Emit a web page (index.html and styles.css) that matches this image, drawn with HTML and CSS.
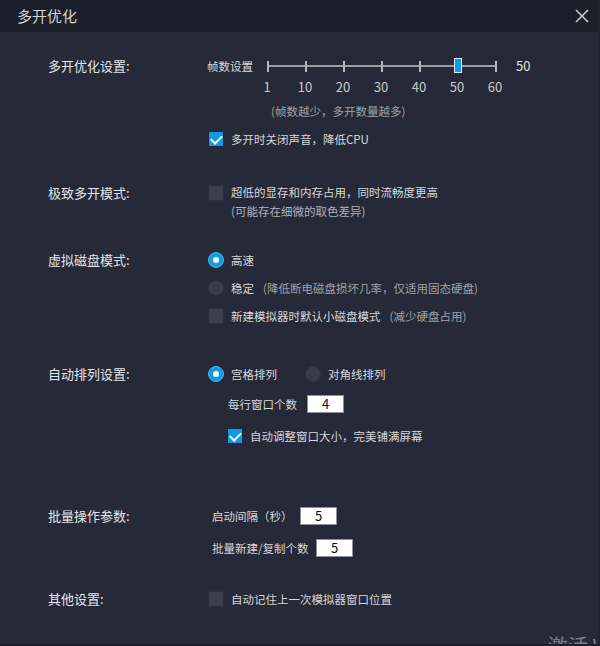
FILE: index.html
```html
<!DOCTYPE html>
<html lang="zh-CN">
<head>
<meta charset="utf-8">
<title>多开优化</title>
<link rel="stylesheet" href="styles.css">
</head>
<body>
<div class="window">
  <div class="titlebar">
    <span class="title">多开优化</span>
    <svg class="close" width="14" height="14" viewBox="0 0 14 14"><path d="M1 1 L13 13 M13 1 L1 13" stroke="#c9c9c9" stroke-width="1.6" fill="none"/></svg>
  </div>
  <div class="content">
    <section class="sec s1">
      <div class="label">多开优化设置:</div>
      <div class="items">
        <div class="slider-row">
          <span class="slider-name">帧数设置</span>
          <div class="track">
            <div class="line"></div>
            <i class="tick"></i><i class="tick"></i><i class="tick"></i><i class="tick"></i><i class="tick"></i><i class="tick"></i><i class="tick"></i>
            <span class="thumb"></span>
          </div>
          <span class="slider-val">50</span>
        </div>
        <div class="scale"><span>1</span><span>10</span><span>20</span><span>30</span><span>40</span><span>50</span><span>60</span></div>
        <div class="hint">(帧数越少，多开数量越多)</div>
        <div class="opt m-cb1"><span class="cb on"></span><span>多开时关闭声音，降低CPU</span></div>
      </div>
    </section>

    <section class="sec s2">
      <div class="label">极致多开模式:</div>
      <div class="items">
        <div class="opt multi"><span class="cb"></span><span class="lines"><span>超低的显存和内存占用，同时流畅度更高</span><span>(可能存在细微的取色差异)</span></span></div>
      </div>
    </section>

    <section class="sec s3">
      <div class="label">虚拟磁盘模式:</div>
      <div class="items gap8">
        <div class="opt"><span class="rd on"></span><span>高速</span></div>
        <div class="opt"><span class="rd"></span><span>稳定</span><span class="gray g1">(降低断电磁盘损坏几率，仅适用固态硬盘)</span></div>
        <div class="opt"><span class="cb"></span><span>新建模拟器时默认小磁盘模式</span><span class="gray g2">(减少硬盘占用)</span></div>
      </div>
    </section>

    <section class="sec s4">
      <div class="label">自动排列设置:</div>
      <div class="items">
        <div class="radios">
          <div class="opt"><span class="rd on"></span><span>宫格排列</span></div>
          <div class="opt r2"><span class="rd"></span><span>对角线排列</span></div>
        </div>
        <div class="field f-cols"><span class="fl">每行窗口个数</span><span class="input">4</span></div>
        <div class="opt indent m-cb2"><span class="cb on"></span><span>自动调整窗口大小，完美铺满屏幕</span></div>
      </div>
    </section>

    <section class="sec s5">
      <div class="label">批量操作参数:</div>
      <div class="items">
        <div class="field f-int"><span class="fl">启动间隔（秒）</span><span class="input">5</span></div>
        <div class="field f-cnt"><span class="fl">批量新建/复制个数</span><span class="input">5</span></div>
      </div>
    </section>

    <section class="sec s6">
      <div class="label">其他设置:</div>
      <div class="items">
        <div class="opt"><span class="cb"></span><span>自动记住上一次模拟器窗口位置</span></div>
      </div>
    </section>
  </div>
  <div class="watermark">激活 Windows</div>
</div>
</body>
</html>
```

FILE: styles.css
```css
* { box-sizing: border-box; }
html, body { margin: 0; padding: 0; }
body {
  width: 600px;
  height: 646px;
  overflow: hidden;
  background: #262a38;
  font-family: "Noto Sans CJK SC", "Microsoft YaHei", sans-serif;
  color: #d6d7db;
  font-size: 12px;
}
.window {
  position: relative;
  width: 600px;
  height: 646px;
  background: #262a38;
  border-right: 2px solid #1f2230;
  border-bottom: 2px solid #1c1f2a;
  overflow: hidden;
}
.titlebar {
  height: 32px;
  background: #1c1f29;
  display: flex;
  align-items: center;
  justify-content: space-between;
  padding: 0 9px 0 17px;
}
.title { font-size: 15px; color: #d2d3d6; line-height: 20px; }
.close { display: block; }

.content { padding-left: 48px; }
.sec { display: flex; align-items: flex-start; }
.label {
  width: 160px;
  flex: none;
  font-size: 13px;
  line-height: 20px;
  color: #e4e5e8;
}
.items { display: flex; flex-direction: column; font-size: 11.5px; }
.items.gap8 { gap: 8px; }

.s1 { padding-top: 24px; }
.s2 { margin-top: 34px; }
.s3 { margin-top: 29px; }
.s4 { margin-top: 38px; }
.s5 { margin-top: 60px; }
.s6 { margin-top: 31px; }

/* slider */
.slider-row { display: flex; align-items: center; height: 20px; margin-left: -1px; }
.slider-name { width: 60px; font-size: 11.5px; color: #d9dadd; line-height: 20px; }
.track {
  position: relative;
  width: 230px;
  height: 20px;
  display: flex;
  justify-content: space-between;
  align-items: center;
}
.track .line {
  position: absolute;
  left: 0; right: 0; top: 9px;
  height: 2px;
  background: #9c9ea4;
}
.tick {
  display: block;
  width: 2px;
  height: 11px;
  background: #b4b6bb;
  position: relative;
}
.thumb {
  position: absolute;
  left: 187px;
  top: 2px;
  width: 8px;
  height: 15px;
  background: #0f9ae3;
  border: 1px solid #e8f4fb;
}
.slider-val { margin-left: 19px; font-size: 13px; color: #e0e1e4; line-height: 20px; }

.scale {
  display: flex;
  justify-content: space-between;
  width: 258px;
  margin-left: 44px;
  margin-top: 1px;
  height: 20px;
  line-height: 20px;
  font-size: 13px;
  color: #c9cace;
}
.scale span { width: 30px; text-align: center; }

.hint {
  margin-left: 63px;
  margin-top: 4px;
  line-height: 20px;
  color: #9ea0a7;
}
.m-cb1 { margin-top: 8px; }

/* options */
.opt { display: flex; align-items: center; height: 20px; line-height: 20px; white-space: nowrap; }
.opt > .cb, .opt > .rd { margin-right: 7px; }
.cb {
  width: 16px; height: 16px; flex: none;
  background: #3c3f4c;
  border: 1px solid #2b2e3a;
  border-radius: 1px;
  position: relative;
}
.cb.on { background: #119be5; border-color: #1f2433; }
.cb.on::after {
  content: "";
  position: absolute;
  left: 4px; top: 1px;
  width: 5px; height: 9px;
  border: solid #ffffff;
  border-width: 0 2px 2px 0;
  transform: rotate(45deg);
}
.rd {
  width: 16px; height: 16px; flex: none;
  border-radius: 50%;
  background: #393c48;
  border: 1px solid #30333f;
  position: relative;
}
.rd.on { background: #119be5; border-color: #4bb6ee; }
.rd.on::after {
  content: "";
  position: absolute;
  left: 4px; top: 4px;
  width: 6px; height: 6px;
  border-radius: 50%;
  background: #ffffff;
}
.opt.multi { align-items: flex-start; height: auto; }
.opt.multi .cb { margin-top: 2px; }
.lines { display: flex; flex-direction: column; line-height: 19px; }
.lines span:last-child { color: #b0b2b8; }
.gray { color: #9ea0a7; }
.g1 { margin-left: 9px; }
.g2 { margin-left: 9px; }

.radios { display: flex; }
.r2 { margin-left: 28px; }

.field { display: flex; align-items: center; height: 20px; line-height: 20px; }
.fl { flex: none; white-space: nowrap; }
.input {
  width: 37px; height: 18px;
  background: #ffffff;
  border: 1px solid #8e9097;
  color: #111;
  text-align: center;
  font-size: 13px;
  line-height: 16px;
}
.f-cols { margin-left: 20px; margin-top: 10px; }
.f-cols .fl { width: 79px; }
.indent { margin-left: 19px; }
.m-cb2 { margin-top: 12px; }
.f-int { margin-left: 4px; }
.f-int .fl { width: 88px; }
.f-cnt { margin-left: 4px; margin-top: 12px; }
.f-cnt .fl { width: 104px; }

.watermark {
  position: absolute;
  left: 548px;
  top: 634px;
  font-size: 20px;
  line-height: 24px;
  color: rgba(200, 202, 208, 0.55);
  white-space: nowrap;
}
```
